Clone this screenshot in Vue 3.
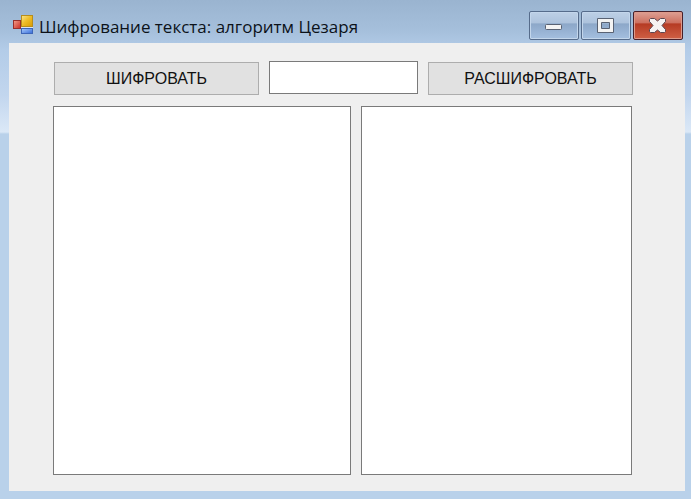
<script setup>
import { ref } from 'vue'

const source = ref('')
const result = ref('')
const shift = ref('')

const alphabet = 'абвгдеёжзийклмнопрстуфхцчшщъыьэюя'

function caesar(text, step) {
  const size = alphabet.length
  return [...text]
    .map((char) => {
      const lower = char.toLowerCase()
      const index = alphabet.indexOf(lower)
      if (index < 0) return char
      const next = alphabet[(((index + step) % size) + size) % size]
      return char === lower ? next : next.toUpperCase()
    })
    .join('')
}

function encrypt() {
  result.value = caesar(source.value, Number(shift.value) || 0)
}

function decrypt() {
  source.value = caesar(result.value, -(Number(shift.value) || 0))
}
</script>

<template>
  <div class="window">
    <header class="titlebar">
      <svg class="app-icon" width="20" height="20" viewBox="0 0 20 20" aria-hidden="true">
        <defs>
          <linearGradient id="gold" x1="0" y1="0" x2="1" y2="1">
            <stop offset="0" stop-color="#fbe68c" />
            <stop offset="0.45" stop-color="#efbf2c" />
            <stop offset="1" stop-color="#d99a00" />
          </linearGradient>
          <linearGradient id="red" x1="0" y1="0" x2="1" y2="1">
            <stop offset="0" stop-color="#f5a08c" />
            <stop offset="1" stop-color="#c92b24" />
          </linearGradient>
          <linearGradient id="blue" x1="0" y1="0" x2="1" y2="1">
            <stop offset="0" stop-color="#a9cdfb" />
            <stop offset="1" stop-color="#3569d8" />
          </linearGradient>
        </defs>
        <rect x="8.5" y="0.5" width="11" height="11" fill="url(#gold)" stroke="#b78d1c" />
        <rect x="0.5" y="5.5" width="7" height="8" fill="url(#red)" stroke="#98302d" />
        <rect x="8.5" y="13.5" width="11" height="5" fill="url(#blue)" stroke="#3d66b8" />
        <path d="M8 12.5H20" stroke="#dbe5f1" />
      </svg>
      <h1 class="title">Шифрование текста: алгоритм Цезаря</h1>
      <div class="window-buttons">
        <button class="win-btn" type="button" aria-label="Свернуть">
          <svg width="18" height="15" viewBox="0 0 18 15">
            <rect x="0.5" y="6.5" width="16" height="5" rx="1" fill="#f3f3f3" stroke="#596273" />
          </svg>
        </button>
        <button class="win-btn" type="button" aria-label="Развернуть">
          <svg width="18" height="15" viewBox="0 0 18 15">
            <path
              d="M0.5 0.5H16.5V14.5H0.5Z M4.5 4.5V10.5H12.5V4.5Z"
              fill="#f3f3f3" fill-rule="evenodd" stroke="#596273" stroke-linejoin="round"
            />
          </svg>
        </button>
        <button class="win-btn close" type="button" aria-label="Закрыть">
          <svg width="18" height="15" viewBox="0 0 18 15">
            <path
              d="M1.5 0.5H5.5L8.5 3L11.5 0.5H15.5L16.5 1.5V3.5L13 7.5L16.5 11.5V13.5L15.5 14.5H11.5L8.5 12L5.5 14.5H1.5L0.5 13.5V11.5L4 7.5L0.5 3.5V1.5Z"
              fill="#f6f3f3" stroke="#5c4650" stroke-linejoin="round"
            />
          </svg>
        </button>
      </div>
    </header>

    <main class="form">
      <div class="toolbar">
        <button class="action" type="button" @click="encrypt">ШИФРОВАТЬ</button>
        <input v-model="shift" class="shift" type="text" aria-label="Сдвиг" />
        <button class="action" type="button" @click="decrypt">РАСШИФРОВАТЬ</button>
      </div>
      <div class="panes">
        <textarea v-model="source" class="pane" aria-label="Исходный текст"></textarea>
        <textarea v-model="result" class="pane" aria-label="Зашифрованный текст"></textarea>
      </div>
    </main>
  </div>
</template>

<style>
body {
  background: #b9d1ea;
}
</style>

<style scoped>
.window {
  box-sizing: border-box;
  display: flex;
  flex-direction: column;
  min-height: 100vh;
  padding: 0 6px 8px 9px;
  background: linear-gradient(#9ab4d0 0, #a5bfdb 30px, #b3cce8 50px, #c2d6ee 95px, #dbe8f7 132px, #b9d1ea 134px);
  font-family: "Liberation Sans", Arial, sans-serif;
}

.titlebar {
  box-sizing: border-box;
  display: flex;
  align-items: flex-start;
  height: 43px;
  padding: 11px 2px 0 4px;
}

.app-icon {
  flex: none;
  margin-top: 4px;
}

.title {
  flex: 1;
  min-width: 0;
  margin: 4px 0 0 6px;
  color: #0c1219;
  font: 400 17px/24px "Open Sans", "Noto Sans", sans-serif;
  white-space: nowrap;
}

.window-buttons {
  display: flex;
  gap: 2px;
}

.win-btn {
  box-sizing: border-box;
  display: flex;
  align-items: center;
  justify-content: center;
  width: 50px;
  height: 29px;
  padding: 0;
  border: 1px solid #566c8b;
  border-radius: 2px;
  background: linear-gradient(#bdd0e6 0, #acc2dc 42%, #8ca7c8 43%, #a4bfdf 100%);
  box-shadow: inset 0 0 0 1px #c3d6eb;
}

.win-btn.close {
  border-color: #47202a;
  background: linear-gradient(#dda094 0, #cc6e5d 42%, #b53a23 43%, #cf6045 100%);
  box-shadow: inset 0 0 0 1px #dd9a8b;
}

.form {
  flex: 1;
  display: flex;
  flex-direction: column;
  gap: 11px;
  padding: 18px 52px 16px 44px;
  background: #efefef;
}

.toolbar {
  display: grid;
  grid-template-columns: minmax(0, 205fr) minmax(0, 149fr) minmax(0, 205fr);
  align-items: end;
  gap: 10px;
  height: 34px;
  padding-left: 1px;
}

.action {
  box-sizing: border-box;
  width: 100%;
  height: 33px;
  padding: 0;
  border: 1px solid #adadad;
  background: #e1e1e1;
  color: #111;
  font: 16px/20px "Liberation Sans", Arial, sans-serif;
}

.shift {
  box-sizing: border-box;
  align-self: start;
  width: 100%;
  height: 33px;
  padding: 4px 6px;
  border: 1px solid #7a7a7a;
  background: #fff;
  font: 16px/20px "Liberation Sans", Arial, sans-serif;
}

.panes {
  flex: 1;
  display: grid;
  grid-template-columns: minmax(0, 298fr) minmax(0, 271fr);
  gap: 10px;
  padding-right: 1px;
}

.pane {
  box-sizing: border-box;
  width: 100%;
  height: 100%;
  padding: 4px 6px;
  border: 1px solid #7a7a7a;
  background: #fff;
  font: 16px/20px "Liberation Sans", Arial, sans-serif;
  resize: none;
}
</style>
